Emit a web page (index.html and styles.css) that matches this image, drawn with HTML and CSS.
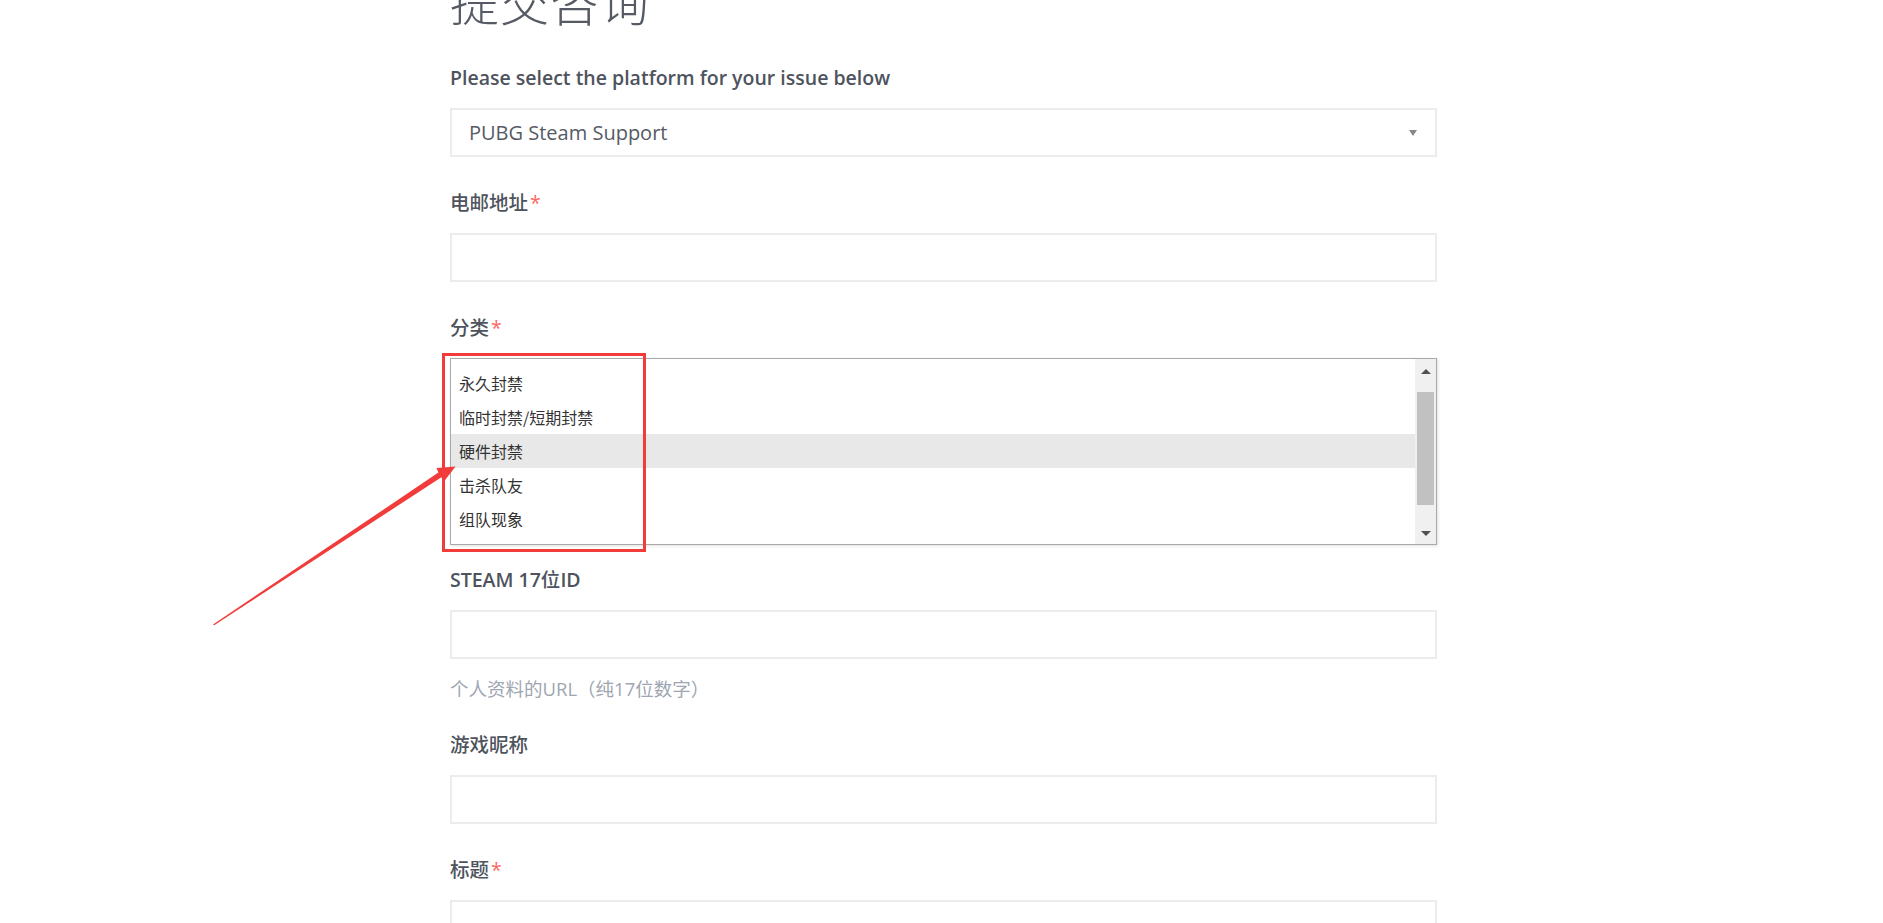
FILE: index.html
```html
<!DOCTYPE html>
<html lang="zh-CN">

<head>
    <meta charset="UTF-8">
    <meta name="viewport" content="width=device-width, initial-scale=1.0">
    <title>提交咨询</title>
    <link rel="stylesheet" href="styles.css">
</head>

<body>

    <div class="page">
        <h1 class="page-title">提交咨询</h1>

        <div class="field">
            <div class="field-label"><span class="en">Please select the platform for your issue below</span></div>
            <div class="select-box">
                <span>PUBG Steam Support</span>
                <span class="caret"></span>
            </div>
        </div>

        <div class="field">
            <label class="field-label" for="email">电邮地址<span class="req">*</span></label>
            <input class="text-input" type="text" id="email">
        </div>

        <div class="field field-list">
            <div class="field-label">分类<span class="req">*</span></div>
            <div class="listbox">
                <div class="options">
                    <div class="option">永久封禁</div>
                    <div class="option">临时封禁/短期封禁</div>
                    <div class="option selected">硬件封禁</div>
                    <div class="option">击杀队友</div>
                    <div class="option">组队现象</div>
                </div>
                <div class="scrollbar">
                    <span class="arrow-up"></span>
                    <div class="thumb"></div>
                    <span class="arrow-down"></span>
                </div>
            </div>
        </div>

        <div class="field field-hinted">
            <label class="field-label" for="steamid"><span class="en">STEAM 17</span>位<span class="en">ID</span></label>
            <input class="text-input" type="text" id="steamid">
            <div class="hint">个人资料的URL（纯17位数字）</div>
        </div>

        <div class="field">
            <label class="field-label" for="nickname">游戏昵称</label>
            <input class="text-input" type="text" id="nickname">
        </div>

        <div class="field">
            <label class="field-label" for="subject">标题<span class="req">*</span></label>
            <input class="text-input" type="text" id="subject">
        </div>
    </div>

    <!-- red markup drawn over the screenshot -->
    <svg class="markup" width="1883" height="923" viewBox="0 0 1883 923">
        <rect x="443.5" y="354.5" width="201" height="196" fill="none" stroke="#f23c3c" stroke-width="3" />
        <polygon fill="#f23c3c"
            points="213,624.5 438.4,472.6 436.5,468 455.5,466.5 443.6,482 441.4,477.3 214.2,625.2" />
    </svg>

</body>

</html>
```

FILE: styles.css
```css
body {
    margin: 0;
    background: #ffffff;
    color: #555a64;
    font-family: "Open Sans", "Noto Sans CJK SC", sans-serif;
    overflow: hidden;
    height: 923px;
}

.page {
    width: 987px;
    padding-left: 4px;
    margin: 0 auto;
}

.page-title {
    margin: -28px 0 0 0;
    font-size: 49px;
    line-height: 60px;
    font-weight: 300;
    letter-spacing: 1px;
    color: #555a64;
    height: 60px;
    padding-bottom: 34px;
}

.field {
    margin-bottom: 34px;
}

.field-list {
    margin-bottom: 23px;
}

.field-label {
    display: block;
    font-size: 19.5px;
    font-weight: 500;
    line-height: 24px;
    margin-bottom: 18px;
    color: #4e535d;
}

/* latin runs in labels look semibold */
.field-label .en {
    font-weight: 600;
}

.req {
    color: #f66;
    margin-left: 2px;
}

.select-box,
.text-input {
    display: flex;
    align-items: center;
    box-sizing: border-box;
    width: 100%;
    height: 49px;
    border: 2px solid #ececec;
    background: #fff;
    margin: 0;
}

.select-box {
    justify-content: space-between;
    padding: 0 18px 0 17px;
    font-size: 20px;
    color: #555a64;
}

.caret {
    width: 0;
    height: 0;
    border-left: 4px solid transparent;
    border-right: 4px solid transparent;
    border-top: 6px solid #888;
}

.text-input {
    outline: none;
    font-family: inherit;
    font-size: 16px;
}

/* 分类 list */
.listbox {
    display: flex;
    box-sizing: border-box;
    height: 187px;
    border: 1px solid #a9a9a9;
    box-shadow: 1px 1px 3px rgba(0, 0, 0, 0.12);
    background: #fff;
}

.options {
    flex: 1;
    padding-top: 7px;
}

.option {
    height: 34px;
    line-height: 34px;
    padding-left: 8px;
    font-size: 16px;
    color: #333;
    font-family: "Noto Sans CJK SC", sans-serif;
}

.option.selected {
    background: #e8e8e8;
}

.scrollbar {
    width: 21px;
    background: #f0f0f0;
    display: flex;
    flex-direction: column;
    align-items: center;
    padding: 10px 0 8px;
    box-sizing: border-box;
}

.arrow-up,
.arrow-down {
    width: 0;
    height: 0;
    border-left: 5px solid transparent;
    border-right: 5px solid transparent;
}

.arrow-up {
    border-bottom: 5px solid #505050;
}

.arrow-down {
    border-top: 5px solid #505050;
    margin-top: auto;
}

.thumb {
    width: 17px;
    height: 113px;
    background: #c1c1c1;
    margin-top: 18px;
}

.field-hinted {
    margin-bottom: 32px;
}

.hint {
    margin-top: 18px;
    font-size: 18.5px;
    line-height: 24px;
    color: #9ea6b1;
}

.markup {
    position: absolute;
    top: 0;
    left: 0;
    pointer-events: none;
}
```
